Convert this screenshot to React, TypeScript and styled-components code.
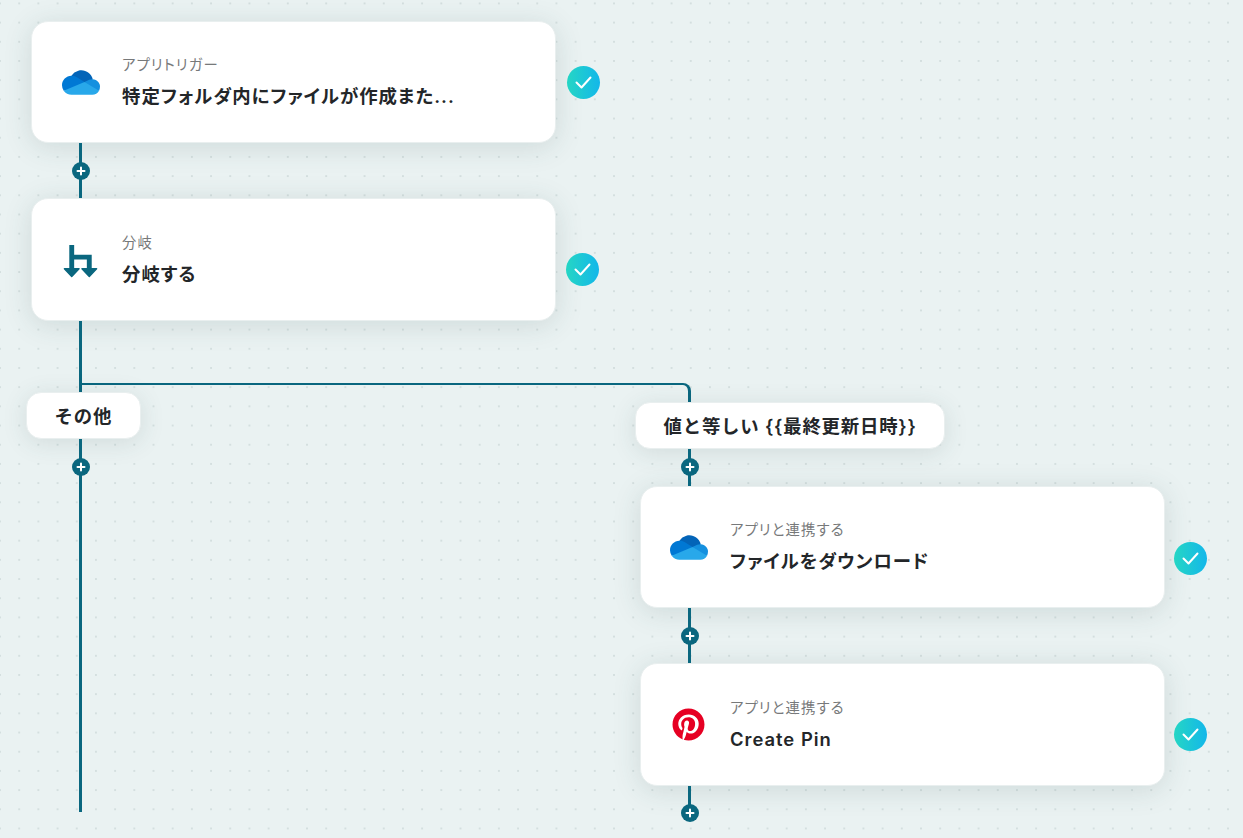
import React from "react";
import styled, { createGlobalStyle } from "styled-components";
import { FaPinterest } from "react-icons/fa";

const Global = createGlobalStyle`
  html, body { margin: 0; padding: 0; }
  body { font-family: Inter, "Noto Sans CJK JP", sans-serif; background: #eaf2f2; }
`;

const Canvas = styled.div`
  width: 1243px;
  height: 838px;
  box-sizing: border-box;
  padding: 21px 0 0 31px;
  overflow: hidden;
  background-color: #eaf2f2;
  background-image: radial-gradient(circle at center, #d4dfdf 0, #d4dfdf 0.9px, transparent 1.5px);
  background-size: 19.2px 19.2px;
  background-position: -9.6px -6.2px;
`;

const Step = styled.div<{ $gap: number }>`
  display: flex;
  align-items: center;
  gap: ${(p) => p.$gap}px;
`;

const Card = styled.div<{ $h?: number; $pad?: number }>`
  width: 525px;
  height: ${(p) => p.$h ?? 122}px;
  box-sizing: border-box;
  display: flex;
  align-items: center;
  gap: 22px;
  padding: 0 ${(p) => p.$pad ?? 29}px;
  background: #fff;
  border: 1px solid #e9efef;
  border-radius: 17px;
  box-shadow: 0 4px 28px rgba(50, 80, 80, 0.15);
`;

const IconBox = styled.div`
  width: 39px;
  height: 39px;
  flex: none;
  display: flex;
  align-items: center;
  justify-content: center;
`;

const CardText = styled.div`
  display: flex;
  flex-direction: column;
  gap: 8px;
  min-width: 0;
`;

const Kicker = styled.div`
  font-size: 14.4px;
  line-height: 20px;
  letter-spacing: 1.1px;
  font-feature-settings: "palt";
  color: #77797a;
`;

const Title = styled.div`
  font-size: 18.4px;
  line-height: 26px;
  font-weight: 600;
  letter-spacing: 1px;
  font-feature-settings: "palt";
  color: #232629;
  white-space: nowrap;
`;

const Done = styled.div<{ $drop?: number }>`
  width: 33px;
  height: 33px;
  flex: none;
  margin-top: ${(p) => p.$drop ?? 0}px;
  border-radius: 50%;
  background: linear-gradient(90deg, #25d6c4, #13b7ea);
  display: flex;
  align-items: center;
  justify-content: center;
`;

const Link = styled.div<{ $h: number }>`
  position: relative;
  width: 3px;
  height: ${(p) => p.$h}px;
  margin-left: 48px;
  background: #0a677f;
`;

const PlusDot = styled.div<{ $at: number }>`
  position: absolute;
  left: -7px;
  top: ${(p) => p.$at - 9}px;
  width: 18px;
  height: 18px;
  border-radius: 50%;
  background: #0a677f;
  display: flex;
  align-items: center;
  justify-content: center;
`;

const Branches = styled.div`
  position: relative;
  display: grid;
  grid-template-columns: 609px 1fr;
`;

const Elbow = styled.div`
  position: absolute;
  left: 48px;
  top: 62px;
  width: 612px;
  height: 19px;
  box-sizing: border-box;
  border-top: 2px solid #0a677f;
  border-right: 3px solid #0a677f;
  border-top-right-radius: 8px;
`;

const BranchColumn = styled.div<{ $top?: number }>`
  display: flex;
  flex-direction: column;
  align-items: flex-start;
  padding-top: ${(p) => p.$top ?? 0}px;
`;

const BranchLabel = styled.div`
  position: relative;
  margin-left: -5px;
  height: 47px;
  box-sizing: border-box;
  padding: 0 27.5px 2px 27.5px;
  display: flex;
  align-items: center;
  background: #fff;
  border: 1px solid #e9efef;
  border-radius: 15px;
  box-shadow: 0 4px 24px rgba(50, 80, 80, 0.13);
  font-size: 18.4px;
  font-weight: 600;
  letter-spacing: 0.8px;
  color: #232629;
  white-space: nowrap;
`;

const PlusLink = ({ h, at }: { h: number; at: number }) => (
  <Link $h={h}>
    <PlusDot $at={at}>
      <svg width="10" height="10" viewBox="0 0 10 10">
        <path d="M5 1.5v7M1.5 5h7" stroke="#fff" strokeWidth="2" strokeLinecap="round" />
      </svg>
    </PlusDot>
  </Link>
);

const Check = ({ drop }: { drop?: number }) => (
  <Done $drop={drop}>
    <svg width="17" height="13" viewBox="0 0 17 13" fill="none">
      <path d="M1.5 6.5l5 5L15.5 1.5" stroke="#fff" strokeWidth="2" strokeLinecap="round" strokeLinejoin="round" />
    </svg>
  </Done>
);

const OneDrive = () => (
  <svg width="38" height="25" viewBox="0 0 1030 662">
    <path fill="#0364b8" d="M622.292 445.338l212.613-203.327C790.741 69.804 615.338-33.996 443.13 10.168a321.9 321.9 0 0 0-188.92 134.837c3.29-.083 368.082 300.333 368.082 300.333z" />
    <path fill="#0078d4" d="M392.776 183.283l-.01.035c-40.626-25.162-87.479-38.462-135.267-38.397-1.104 0-2.189.07-3.29.083C112.064 146.765-1.74 263.423.02 405.595a257.7 257.7 0 0 0 46.567 145.703l318.55-39.89 244.225-196.936z" />
    <path fill="#1490df" d="M834.9 242C950 250 1030 340 1030 447C1030 485 1020 520 1004 552L760 520L609.4 314.5L737.9 258.6A208 208 0 0 1 834.9 242z" />
    <path fill="#28a8ea" d="M46.587 551.298c48.34 69.468 127.707 110.78 212.553 110.623h561.64c76.74.02 147.308-42.167 183.63-109.779L609.363 314.473z" />
  </svg>
);

const BranchIcon = () => (
  <svg width="40" height="40" viewBox="5 4.5 40 40" fill="#0a677f" stroke="#0a677f" strokeLinejoin="round">
    <path strokeWidth="0" d="M13.5 9h5v10H36.5V33h-5V24H18.5V33h-5z" />
    <path strokeWidth="1.5" d="M8.5 33.5h15L16 41.5zM26.5 33.5h15L34 41.5z" />
  </svg>
);

const Pinterest = () => <FaPinterest size={33} color="#e60023" />;

export default function App() {
  return (
    <Canvas>
      <Global />
      <Step $gap={11}>
        <Card>
          <IconBox><OneDrive /></IconBox>
          <CardText>
            <Kicker>アプリトリガー</Kicker>
            <Title>特定フォルダ内にファイルが作成また...</Title>
          </CardText>
        </Card>
        <Check />
      </Step>
      <PlusLink h={55} at={28} />
      <Step $gap={10}>
        <Card $h={123}>
          <IconBox><BranchIcon /></IconBox>
          <CardText>
            <Kicker>分岐</Kicker>
            <Title>分岐する</Title>
          </CardText>
        </Card>
        <Check drop={19} />
      </Step>
      <Branches>
        <Elbow />
        <BranchColumn>
          <Link $h={71} />
          <BranchLabel>その他</BranchLabel>
          <PlusLink h={373} at={28} />
        </BranchColumn>
        <BranchColumn $top={81}>
          <BranchLabel>値と等しい {"{{最終更新日時}}"}</BranchLabel>
          <PlusLink h={37} at={18} />
          <Step $gap={9}>
            <Card $pad={28}>
              <IconBox><OneDrive /></IconBox>
              <CardText>
                <Kicker>アプリと連携する</Kicker>
                <Title>ファイルをダウンロード</Title>
              </CardText>
            </Card>
            <Check drop={22} />
          </Step>
          <PlusLink h={55} at={28} />
          <Step $gap={9}>
            <Card $h={123} $pad={28}>
              <IconBox><Pinterest /></IconBox>
              <CardText>
                <Kicker>アプリと連携する</Kicker>
                <Title>Create Pin</Title>
              </CardText>
            </Card>
            <Check drop={19} />
          </Step>
          <PlusLink h={27} at={27} />
        </BranchColumn>
      </Branches>
    </Canvas>
  );
}
